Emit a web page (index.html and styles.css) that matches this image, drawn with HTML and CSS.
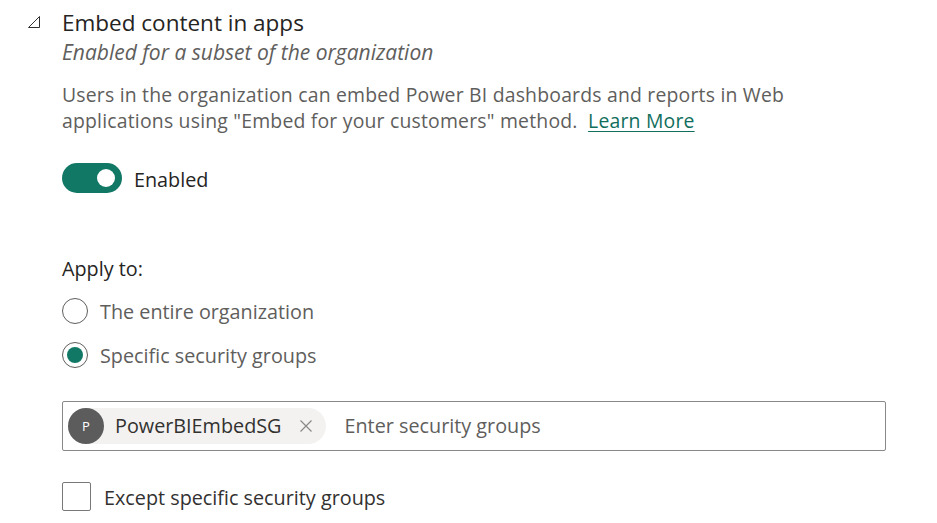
FILE: index.html
```html
<!DOCTYPE html>
<html lang="en">
<head>
<meta charset="utf-8">
<title>Embed content in apps</title>
<link rel="stylesheet" href="styles.css">
</head>
<body>
<section class="setting">
  <div class="header">
    <span class="caret">
      <svg width="14" height="14" viewBox="0 0 14 14" aria-hidden="true">
        <path d="M12.5 1.5 L12.5 12.5 L1.5 12.5 Z" fill="none" stroke="#323130" stroke-width="1" stroke-linejoin="miter"/>
      </svg>
    </span>
    <div class="heading">
      <h2 class="title">Embed content in apps</h2>
      <p class="status">Enabled for a subset of the organization</p>
    </div>
  </div>
  <div class="content">
    <p class="desc">Users in the organization can embed Power BI dashboards and reports in Web<br>applications using "Embed for your customers" method.&nbsp; <a class="link" href="#">Learn More</a></p>

    <div class="toggle-row">
      <span class="toggle"><span class="knob"></span></span>
      <span class="toggle-label">Enabled</span>
    </div>

    <div class="apply">Apply to:</div>

    <div class="radios">
      <div class="radio-row">
        <span class="radio"></span>
        <span class="radio-label">The entire organization</span>
      </div>
      <div class="radio-row">
        <span class="radio checked"><span class="dot"></span></span>
        <span class="radio-label">Specific security groups</span>
      </div>
    </div>

    <div class="picker">
      <span class="chip">
        <span class="avatar">P</span>
        <span class="chip-text">PowerBIEmbedSG</span>
        <svg class="chip-x" width="14" height="14" viewBox="0 0 14 14" aria-hidden="true">
          <path d="M1.5 1.5 L12.5 12.5 M12.5 1.5 L1.5 12.5" stroke="#8a8886" stroke-width="1.2" fill="none"/>
        </svg>
      </span>
      <span class="placeholder">Enter security groups</span>
    </div>

    <div class="check-row">
      <span class="checkbox"></span>
      <span class="check-label">Except specific security groups</span>
    </div>
  </div>
</section>
</body>
</html>
```

FILE: styles.css
```css
html, body {
  margin: 0;
  padding: 0;
  background: #ffffff;
}

body {
  font-family: "Open Sans", "Noto Sans", sans-serif;
  color: #252423;
  width: 937px;
  height: 523px;
  overflow: hidden;
}

.setting {
  padding: 8px 0 0 28px;
}

.header {
  display: flex;
  align-items: flex-start;
}

.caret {
  width: 34px;
  height: 14px;
  margin-top: 7px;
  margin-left: -1px;
  flex: 0 0 35px;
  display: flex;
}

.heading {
  display: flex;
  flex-direction: column;
}

.title {
  margin: 0;
  font-size: 22.5px;
  line-height: 30px;
  font-weight: 400;
  color: #252423;
}

.status {
  margin: 2px 0 0;
  font-size: 21px;
  line-height: 25px;
  font-style: italic;
  color: #605e5c;
}

.content {
  padding-left: 34px;
}

.desc {
  margin: 16.5px 0 0;
  font-size: 19.4px;
  line-height: 26.5px;
  letter-spacing: 0.2px;
  color: #605e5c;
}

.link {
  color: #106e5d;
  text-decoration: underline;
  text-underline-offset: 3px;
}

.toggle-row {
  margin-top: 28.5px;
  display: flex;
  align-items: center;
  height: 30px;
}

.toggle {
  width: 60px;
  height: 30px;
  border-radius: 15px;
  background: #117865;
  display: flex;
  align-items: center;
  justify-content: flex-end;
  padding-right: 7px;
  box-sizing: border-box;
}

.knob {
  width: 18px;
  height: 18px;
  border-radius: 50%;
  background: #ffffff;
}

.toggle-label {
  margin-left: 12px;
  font-size: 19.8px;
  line-height: 30px;
  padding-top: 3px;
  color: #252423;
}

.apply {
  margin-top: 64px;
  font-size: 19.8px;
  line-height: 24px;
  color: #252423;
}

.radios {
  margin-top: 17px;
  display: flex;
  flex-direction: column;
  gap: 18px;
}

.radio-row {
  display: flex;
  align-items: center;
  height: 26px;
}

.radio {
  width: 26px;
  height: 26px;
  box-sizing: border-box;
  border: 1px solid #605e5c;
  border-radius: 50%;
  display: flex;
  align-items: center;
  justify-content: center;
  flex: 0 0 26px;
}

.dot {
  width: 16px;
  height: 16px;
  border-radius: 50%;
  background: #117865;
}

.radio-label {
  margin-left: 12px;
  font-size: 19.8px;
  line-height: 26px;
  padding-top: 2px;
  color: #605e5c;
}

.picker {
  margin-top: 33px;
  width: 824px;
  height: 50px;
  box-sizing: border-box;
  border: 1px solid #8a8886;
  border-radius: 2px;
  display: flex;
  align-items: center;
  padding-left: 5px;
}

.chip {
  display: flex;
  align-items: center;
  height: 36px;
  border-radius: 18px;
  background: #f3f2f1;
  padding-right: 13px;
}

.avatar {
  width: 36px;
  height: 36px;
  border-radius: 50%;
  background: #5c5c5c;
  color: #ffffff;
  font-size: 13px;
  line-height: 36px;
  text-align: center;
}

.chip-text {
  margin-left: 11px;
  font-size: 19.8px;
  line-height: 36px;
  color: #323130;
}

.chip-x {
  margin-left: 18px;
}

.placeholder {
  margin-left: 18px;
  font-size: 19.8px;
  line-height: 36px;
  color: #605e5c;
}

.check-row {
  margin-top: 31px;
  display: flex;
  align-items: center;
  height: 29px;
}

.checkbox {
  width: 29px;
  height: 29px;
  box-sizing: border-box;
  border: 1px solid #7a7876;
  border-radius: 2px;
  flex: 0 0 29px;
}

.check-label {
  margin-left: 13px;
  font-size: 19.8px;
  line-height: 28px;
  padding-top: 2px;
  color: #323130;
}
```
